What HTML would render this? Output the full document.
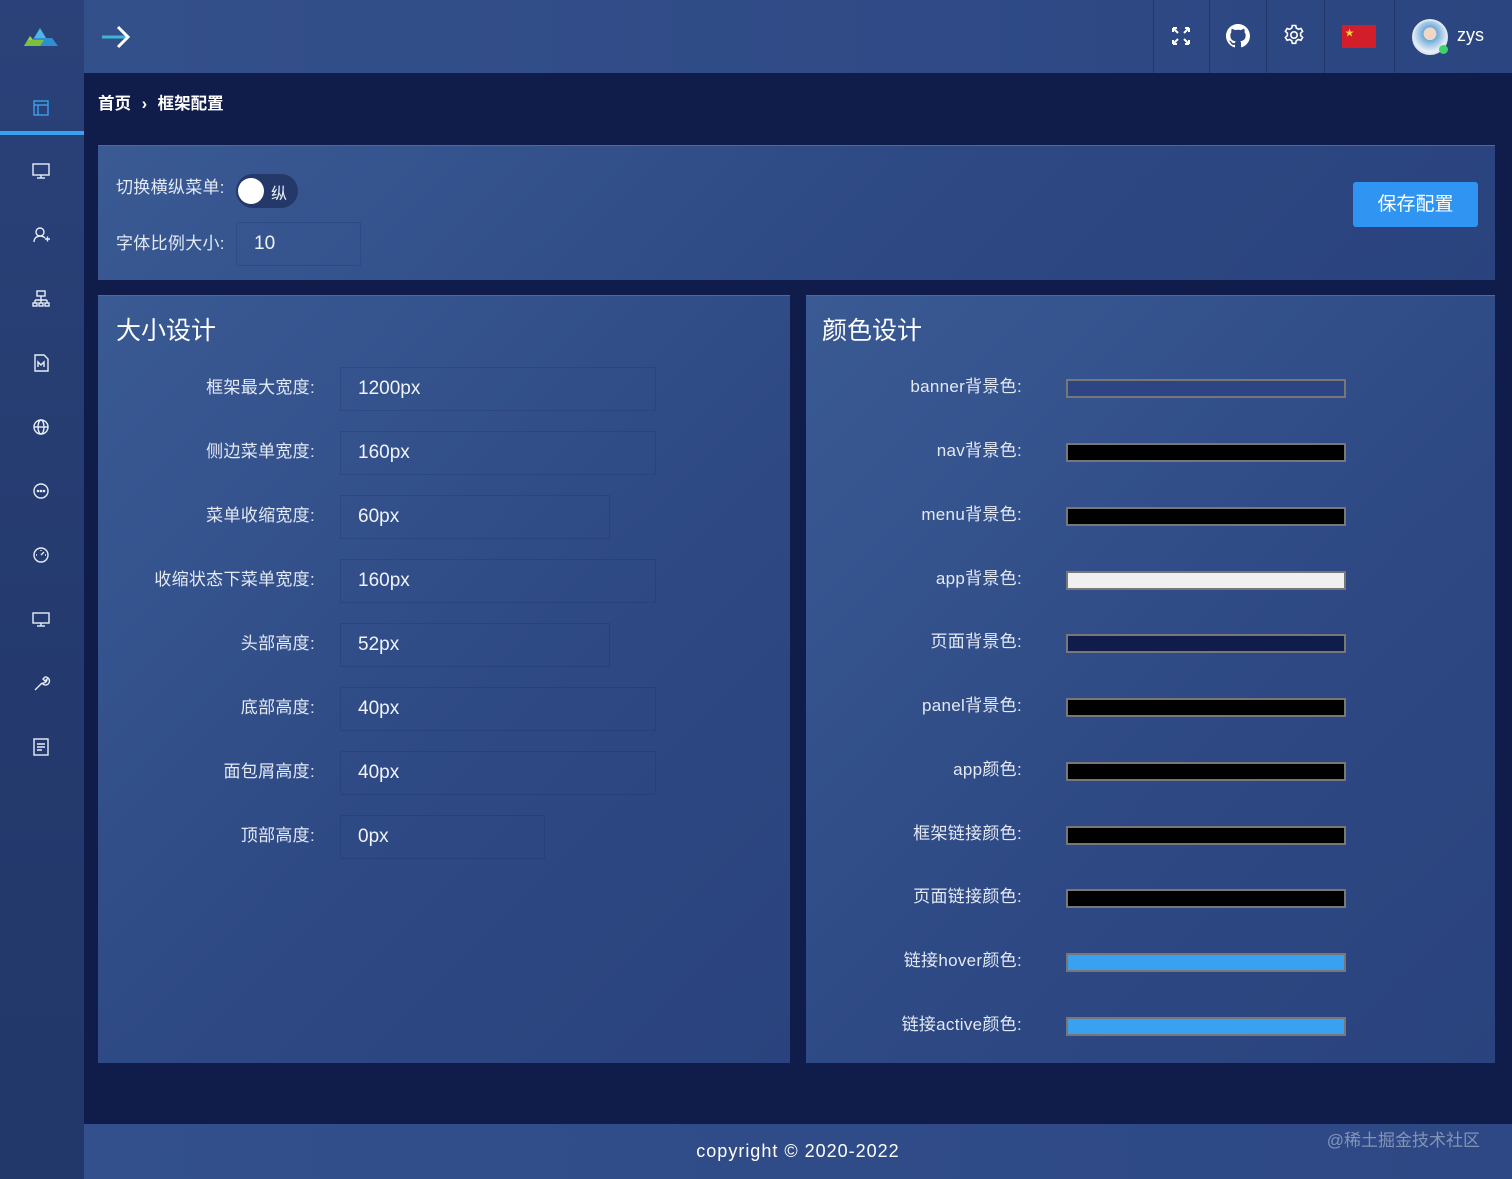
<!DOCTYPE html>
<html><head><meta charset="utf-8">
<style>
*{margin:0;padding:0;box-sizing:border-box}
body{width:1512px;height:1179px;overflow:hidden;background:#101c4a;font-family:"Liberation Sans","Noto Sans CJK SC",sans-serif;color:#e8eef8;position:relative}
.side{position:absolute;left:0;top:0;width:84px;height:1179px;background:linear-gradient(180deg,#2a4279,#243a6e 60%,#22386a)}
.hdr{position:absolute;left:84px;top:0;width:1428px;height:73px;background:linear-gradient(90deg,#34508a,#2f4a86 60%,#2b4580)}
.ic{position:absolute;left:30px;width:22px;height:22px}
.ic svg{width:22px;height:22px;stroke:#e8eef8;fill:none;stroke-width:1.4}
.bc{position:absolute;left:98px;top:90px;font-size:16.5px;color:#fff;font-weight:bold}
.panel{position:absolute;background:linear-gradient(135deg,#3a5a94,#2d4883 60%,#2a437e);border-top:1px solid #4a6aa4}
.lbl{position:absolute;font-size:17px;letter-spacing:.3px;color:#e3e9f5;text-align:right;line-height:20px}
.inp{position:absolute;height:44px;border:1px solid rgba(20,35,80,.18);font-size:19px;color:#f0f4fa;padding-left:17px;line-height:42px}
.sw{position:absolute;left:1066px;width:280px;height:19px;border:2px solid #777}
.hs{position:absolute;top:0;height:73px;width:1px;background:rgba(20,30,70,.4)}
</style></head><body>
<div class="side">
 <svg style="position:absolute;left:22px;top:26px" width="40" height="22" viewBox="0 0 40 22"><polygon points="18,2 24,12 12,12" fill="#4fb6e8"/><polygon points="8,10 14,17 2,20" fill="#9bd23c"/><polygon points="12,12 30,12 36,20 4,20" fill="#2f8fd0"/><polygon points="6,14 22,14 18,20 2,20" fill="#7cc042"/></svg>
 <div class="ic" style="top:97px"><svg viewBox="0 0 22 22" style="stroke:#3aa0f0"><rect x="4" y="4" width="14" height="14"/><line x1="4" y1="8" x2="18" y2="8"/><line x1="8" y1="8" x2="8" y2="18"/></svg></div>
 <div style="position:absolute;left:0;top:131px;width:84px;height:4px;background:#3aa0f0"></div>
 <div class="ic" style="top:160px"><svg viewBox="0 0 22 22"><rect x="3" y="4" width="16" height="11"/><line x1="11" y1="15" x2="11" y2="18"/><line x1="7" y1="18" x2="15" y2="18"/></svg></div>
 <div class="ic" style="top:224px"><svg viewBox="0 0 22 22"><circle cx="10" cy="8" r="4"/><path d="M4 18c0-4 3-6 6-6s4 1 5 2M15 15h5M17.5 12.5v5"/></svg></div>
 <div class="ic" style="top:288px"><svg viewBox="0 0 22 22"><rect x="7" y="3" width="8" height="5"/><path d="M11 8v4M5 12h12M5 12v3M11 12v3M17 12v3"/><rect x="3" y="15" width="4" height="3"/><rect x="9" y="15" width="4" height="3"/><rect x="15" y="15" width="4" height="3"/></svg></div>
 <div class="ic" style="top:352px"><svg viewBox="0 0 22 22"><path d="M5 3h9l4 4v12H5z"/><path d="M8 15v-5l3 3 3-3v5"/></svg></div>
 <div class="ic" style="top:416px"><svg viewBox="0 0 22 22"><circle cx="11" cy="11" r="7"/><ellipse cx="11" cy="11" rx="3" ry="7"/><line x1="4" y1="11" x2="18" y2="11"/></svg></div>
 <div class="ic" style="top:480px"><svg viewBox="0 0 22 22"><circle cx="11" cy="11" r="7"/><circle cx="8" cy="11" r=".6"/><circle cx="11" cy="11" r=".6"/><circle cx="14" cy="11" r=".6"/></svg></div>
 <div class="ic" style="top:544px"><svg viewBox="0 0 22 22"><circle cx="11" cy="11" r="7"/><path d="M11 11l3-3M6 11h1M15 11h1M11 6v1"/></svg></div>
 <div class="ic" style="top:608px"><svg viewBox="0 0 22 22"><rect x="3" y="5" width="16" height="10"/><line x1="11" y1="15" x2="11" y2="18"/><line x1="7" y1="18" x2="15" y2="18"/></svg></div>
 <div class="ic" style="top:672px"><svg viewBox="0 0 22 22"><path d="M5 18l7-7M12 11a4 4 0 1 0 3-6l-2 2 2 2 2-2a4 4 0 0 1-5 4"/></svg></div>
 <div class="ic" style="top:736px"><svg viewBox="0 0 22 22"><rect x="4" y="3" width="14" height="16"/><path d="M7 8h8M7 11h8M7 14h5"/></svg></div>
</div>
<div class="hdr">
 <svg style="position:absolute;left:16px;top:24px" width="32" height="26" viewBox="0 0 32 26"><path d="M2 13h26" stroke="#3bb5d8" stroke-width="3"/><path d="M18 3l10 10-10 10" stroke="#fff" stroke-width="3" fill="none"/></svg>
 <div class="hs" style="left:1069px"></div><div class="hs" style="left:1125px"></div><div class="hs" style="left:1182px"></div><div class="hs" style="left:1240px"></div><div class="hs" style="left:1310px"></div>
 <svg style="position:absolute;left:1087px;top:26px" width="20" height="20" viewBox="0 0 20 20" stroke="#fff" stroke-width="2" fill="none"><path d="M2 2l5 5M2 2v4M2 2h4M18 2l-5 5M18 2v4M18 2h-4M2 18l5-5M2 18v-4M2 18h4M18 18l-5-5M18 18v-4M18 18h-4"/></svg>
 <svg style="position:absolute;left:1142px;top:24px" width="24" height="24" viewBox="0 0 16 16" fill="#fff"><path d="M8 0C3.6 0 0 3.6 0 8c0 3.5 2.3 6.5 5.5 7.6.4.1.5-.2.5-.4v-1.4c-2.2.5-2.7-1-2.7-1-.4-.9-.9-1.200-.9-1.200-.7-.5.1-.5.1-.5.8.1 1.2.8 1.2.8.7 1.2 1.9.9 2.3.7.1-.5.3-.9.5-1.1-1.8-.2-3.6-.9-3.6-4 0-.9.3-1.6.8-2.1-.1-.2-.4-1 .1-2.1 0 0 .7-.2 2.2.8.6-.2 1.3-.3 2-.3s1.4.1 2 .3c1.5-1 2.2-.8 2.2-.8.4 1.1.2 1.9.1 2.1.5.6.8 1.3.8 2.1 0 3.1-1.9 3.7-3.6 3.9.3.3.5.8.5 1.5v2.2c0 .2.1.5.6.4C13.7 14.5 16 11.5 16 8c0-4.4-3.6-8-8-8z"/></svg>
 <svg style="position:absolute;left:1198px;top:23px" width="24" height="24" viewBox="0 0 24 24" fill="none" stroke="#fff" stroke-width="1.6"><circle cx="12" cy="12" r="3.2"/><path d="M10.3 2.5h3.4l.6 2.6 2.1 1.2 2.5-.8 1.7 2.9-2 1.8v2.4l2 1.8-1.7 2.9-2.5-.8-2.1 1.2-.6 2.6h-3.4l-.6-2.6-2.1-1.2-2.5.8-1.7-2.9 2-1.8v-2.4l-2-1.8 1.7-2.9 2.5.8 2.1-1.2z"/></svg>
 <div style="position:absolute;left:1258px;top:25px;width:34px;height:23px;background:#d21d2b"><span style="position:absolute;left:3px;top:1px;color:#ffd83a;font-size:9px">★</span></div>
 <div style="position:absolute;left:1328px;top:19px;width:36px;height:36px;border-radius:50%;background:radial-gradient(circle at 50% 40%,#f1d6c4 0 25%,#6aa9d8 26%,#e9eef5 70%);border:2px solid #dde6f3"></div>
 <div style="position:absolute;left:1355px;top:45px;width:9px;height:9px;border-radius:50%;background:#3ed26a"></div>
 <div style="position:absolute;left:1373px;top:25px;font-size:18px;color:#fff">zys</div>
</div>
<div class="bc">首页 <span style="margin:0 6px">›</span> 框架配置</div>

<div class="panel" style="left:98px;top:145px;width:1397px;height:135px">
 <div class="lbl" style="left:18px;top:32px">切换横纵菜单:</div>
 <div style="position:absolute;left:138px;top:28px;width:62px;height:34px;border-radius:17px;background:#24386a"><div style="position:absolute;left:2px;top:4px;width:26px;height:26px;border-radius:50%;background:#fff"></div><span style="position:absolute;left:35px;top:6px;font-size:16px">纵</span></div>
 <div class="lbl" style="left:18px;top:88px">字体比例大小:</div>
 <div class="inp" style="left:138px;top:76px;width:125px">10</div>
 <div style="position:absolute;left:1255px;top:36px;width:125px;height:45px;background:#2f94f2;border-radius:3px;font-size:19px;color:#fff;text-align:center;line-height:45px">保存配置</div>
</div>

<div class="panel" style="left:98px;top:295px;width:692px;height:768px">
 <div style="position:absolute;left:18px;top:15px;font-size:25px;color:#fff">大小设计</div>
 <div class="lbl" style="right:475px;top:82px">框架最大宽度:</div><div class="inp" style="left:242px;top:71px;width:316px">1200px</div>
 <div class="lbl" style="right:475px;top:146px">侧边菜单宽度:</div><div class="inp" style="left:242px;top:135px;width:316px">160px</div>
 <div class="lbl" style="right:475px;top:210px">菜单收缩宽度:</div><div class="inp" style="left:242px;top:199px;width:270px">60px</div>
 <div class="lbl" style="right:475px;top:274px">收缩状态下菜单宽度:</div><div class="inp" style="left:242px;top:263px;width:316px">160px</div>
 <div class="lbl" style="right:475px;top:338px">头部高度:</div><div class="inp" style="left:242px;top:327px;width:270px">52px</div>
 <div class="lbl" style="right:475px;top:402px">底部高度:</div><div class="inp" style="left:242px;top:391px;width:316px">40px</div>
 <div class="lbl" style="right:475px;top:466px">面包屑高度:</div><div class="inp" style="left:242px;top:455px;width:316px">40px</div>
 <div class="lbl" style="right:475px;top:530px">顶部高度:</div><div class="inp" style="left:242px;top:519px;width:205px">0px</div>
</div>

<div class="panel" style="left:806px;top:295px;width:689px;height:768px">
 <div style="position:absolute;left:16px;top:15px;font-size:25px;color:#fff">颜色设计</div>
</div>
<div class="lbl" style="right:490px;top:377px">banner背景色:</div><div class="sw" style="top:379px;background:#2d4683"></div>
<div class="lbl" style="right:490px;top:441px">nav背景色:</div><div class="sw" style="top:443px;background:#000"></div>
<div class="lbl" style="right:490px;top:505px">menu背景色:</div><div class="sw" style="top:507px;background:#000"></div>
<div class="lbl" style="right:490px;top:569px">app背景色:</div><div class="sw" style="top:571px;background:#f0f0f0"></div>
<div class="lbl" style="right:490px;top:632px">页面背景色:</div><div class="sw" style="top:634px;background:#101c4a"></div>
<div class="lbl" style="right:490px;top:696px">panel背景色:</div><div class="sw" style="top:698px;background:#000"></div>
<div class="lbl" style="right:490px;top:760px">app颜色:</div><div class="sw" style="top:762px;background:#000"></div>
<div class="lbl" style="right:490px;top:824px">框架链接颜色:</div><div class="sw" style="top:826px;background:#000"></div>
<div class="lbl" style="right:490px;top:887px">页面链接颜色:</div><div class="sw" style="top:889px;background:#000"></div>
<div class="lbl" style="right:490px;top:951px">链接hover颜色:</div><div class="sw" style="top:953px;background:#3aa0f0"></div>
<div class="lbl" style="right:490px;top:1015px">链接active颜色:</div><div class="sw" style="top:1017px;background:#3aa0f0"></div>

<div style="position:absolute;left:84px;top:1124px;width:1428px;height:55px;background:linear-gradient(90deg,#33508c,#2d4884)">
 <div style="position:absolute;left:0;width:1428px;top:17px;text-align:center;font-size:18px;letter-spacing:1px;color:#fff">copyright © 2020-2022</div>
 <div style="position:absolute;right:32px;top:2px;font-size:17px;color:rgba(200,210,230,.55)">@稀土掘金技术社区</div>
</div>
</body></html>
